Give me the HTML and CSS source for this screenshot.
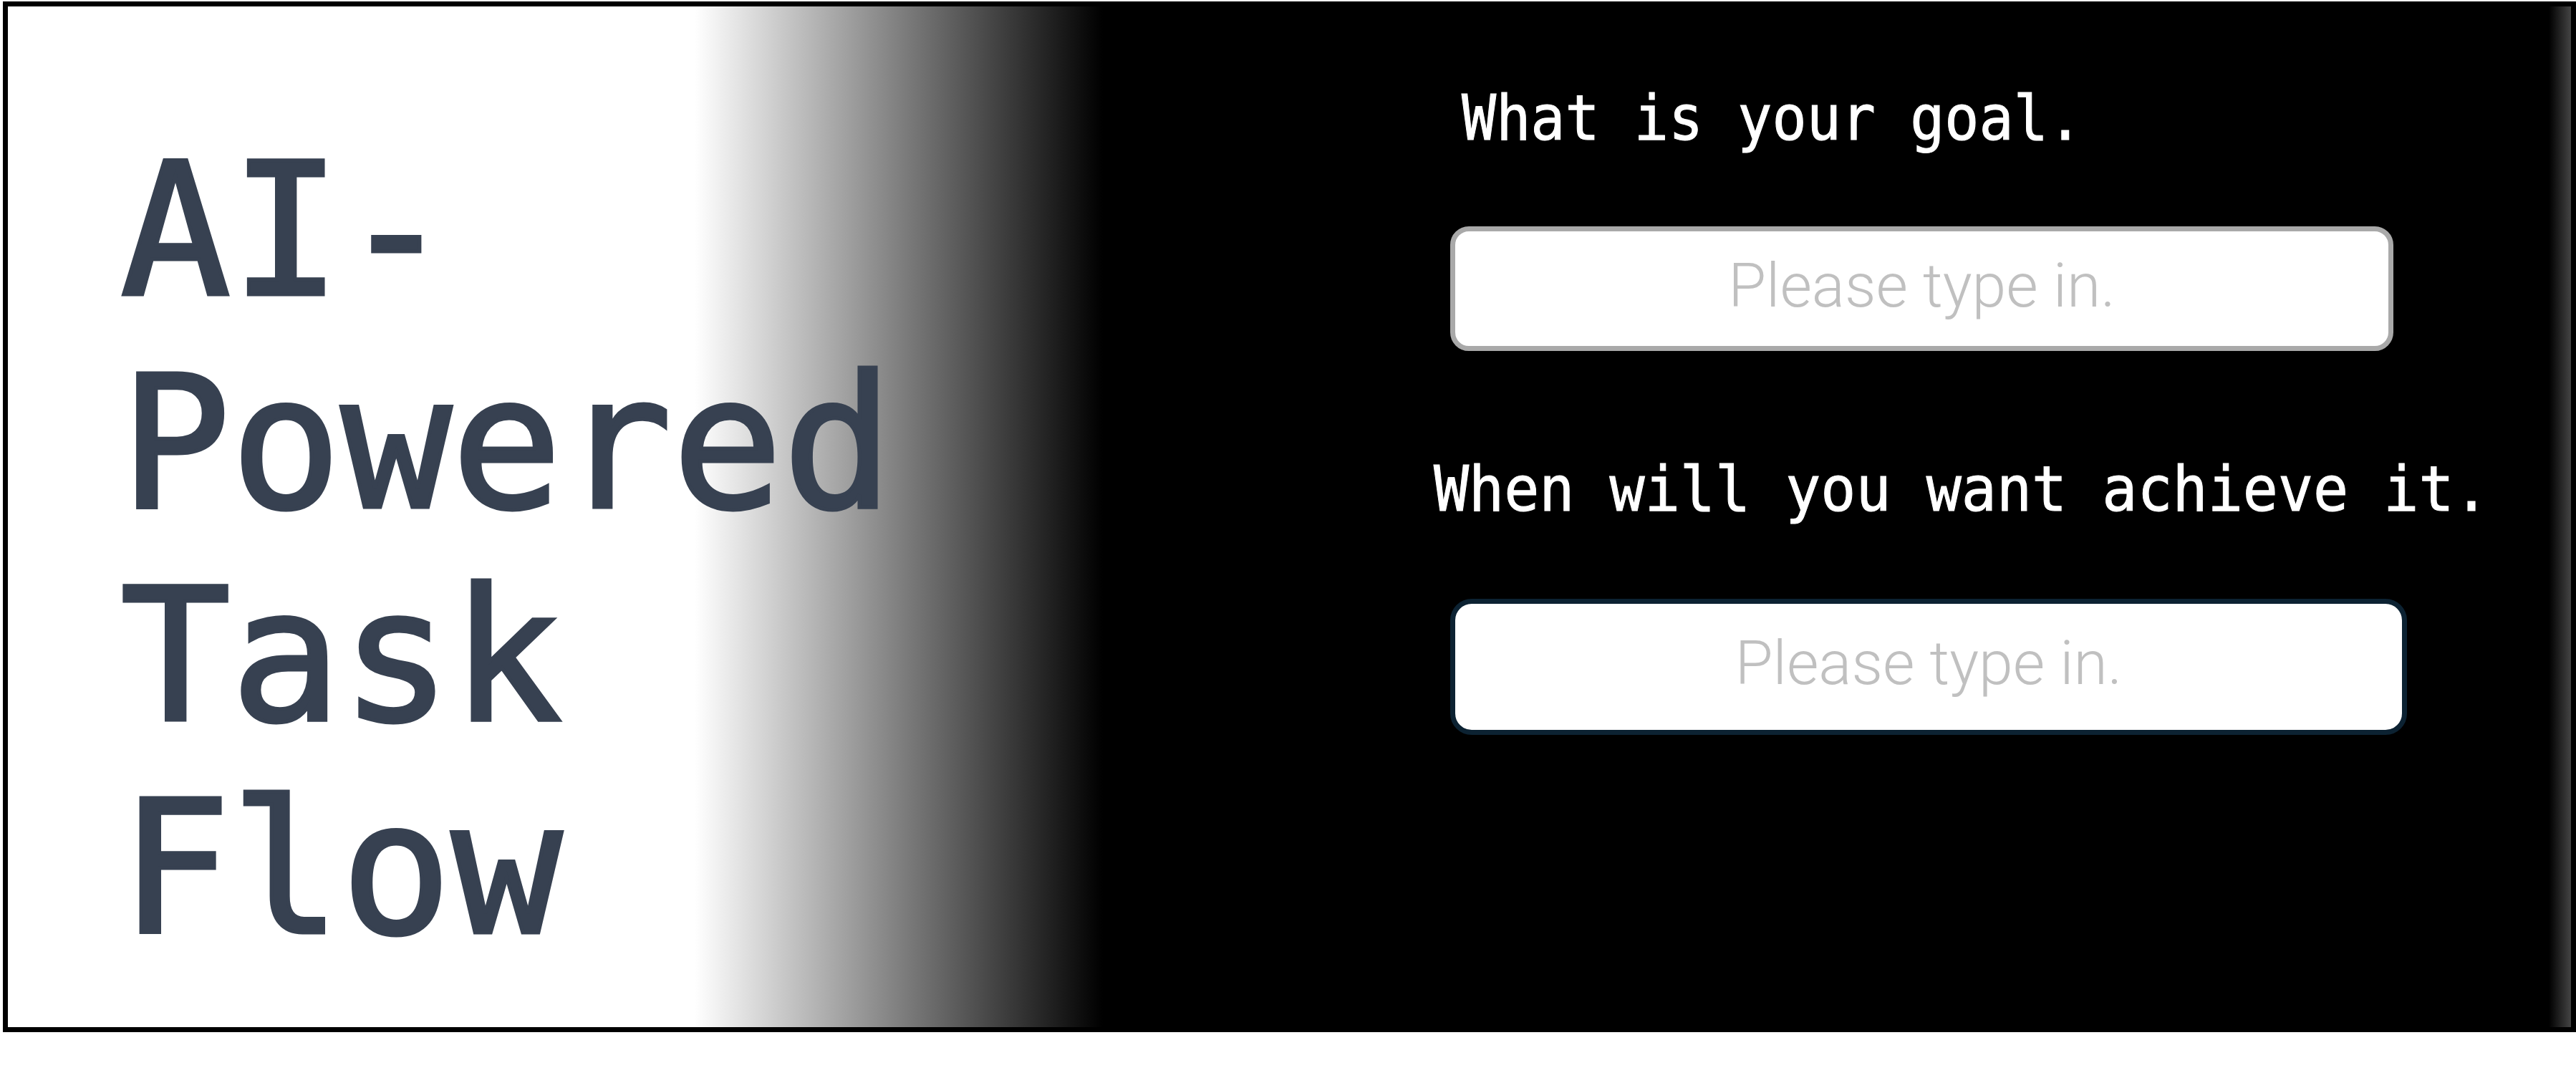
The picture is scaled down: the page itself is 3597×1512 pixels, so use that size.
FILE: index.html
```html
<!DOCTYPE html>
<html lang="en">
<head>
<meta charset="utf-8">
<title>AI-Powered Task Flow</title>
<link rel="stylesheet" href="styles.css">
</head>
<body>
<main class="frame">
  <section class="title-panel">
    <h1 class="title">AI-<br>Powered<br>Task<br>Flow</h1>
  </section>
  <section class="form-panel">
    <h2 class="question q-goal">What is your goal.</h2>
    <input class="field field-goal" type="text" placeholder="Please type in.">
    <h2 class="question q-when">When will you want achieve it.</h2>
    <input class="field field-when" type="text" placeholder="Please type in.">
  </section>
</main>
</body>
</html>
```

FILE: styles.css
```css
html, body {
  margin: 0;
  padding: 0;
  background: #fff;
}

.frame {
  box-sizing: border-box;
  margin: 2px 0 0 4px;
  width: 3593px;
  height: 1439px;
  border: 7px solid #000;
  display: flex;
  overflow: hidden;
  background:
    linear-gradient(to right, rgba(68,68,68,0) calc(100% - 31px), #444 100%),
    linear-gradient(to right, #fff 959px, #000 1529px);
}

.title-panel {
  flex: 0 0 2014px;
  padding: 165px 0 0 157px;
  box-sizing: border-box;
}

.title {
  margin: 0;
  font-family: "DejaVu Sans Mono", monospace;
  font-weight: normal;
  font-size: 256px;
  line-height: 297px;
  color: #374151;
  -webkit-text-stroke: 5px #374151;
}

.form-panel {
  flex: 1 1 auto;
  display: flex;
  flex-direction: column;
  align-items: flex-start;
  padding-top: 111px;
}

.question {
  margin: 0;
  font-family: "DejaVu Sans Mono", monospace;
  font-weight: normal;
  font-size: 80px;
  line-height: 95px;
  color: #fff;
  white-space: nowrap;
  -webkit-text-stroke: 1px #fff;
  transform: scaleY(1.08);
  transform-origin: left 80%;
}

.q-goal {
  margin-left: 16px;
}

.q-when {
  font-size: 81.6px;
  margin-top: 147px;
  margin-left: -23px;
}

.field {
  box-sizing: border-box;
  display: block;
  margin: 0;
  background: #fff;
  font-family: Roboto, "Liberation Sans", sans-serif;
  font-weight: 300;
  font-size: 86px;
  text-align: center;
  color: #333;
  outline: none;
}

.field::placeholder {
  color: #c0c0c0;
  opacity: 1;
}

.field-goal {
  margin-top: 101px;
  width: 1317px;
  height: 174px;
  border: 7px solid #a9a9a9;
  border-radius: 26px;
  padding: 0 0 10px;
}

.field-when {
  margin-top: 104px;
  width: 1336px;
  height: 190px;
  border: 7px solid #0c2232;
  border-radius: 30px;
  padding: 0 0 12px;
}
```
